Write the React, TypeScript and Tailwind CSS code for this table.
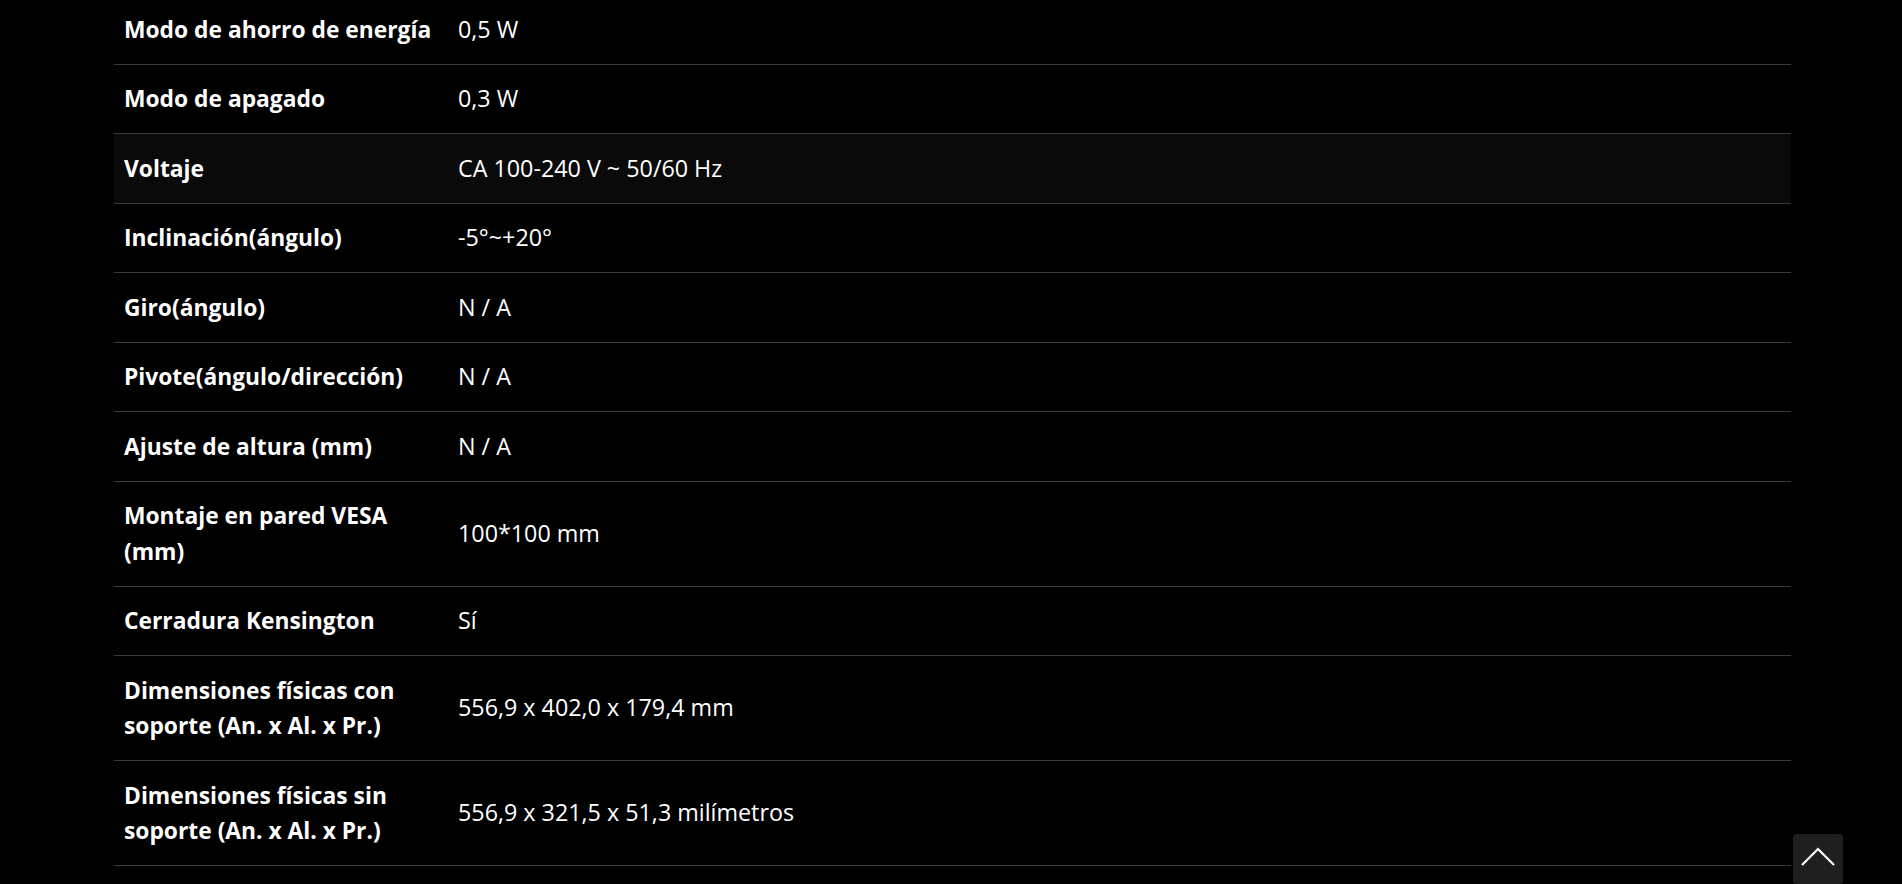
const specs = [
  { label: 'Modo de ahorro de energía', value: '0,5 W' },
  { label: 'Modo de apagado', value: '0,3 W' },
  { label: 'Voltaje', value: 'CA 100-240 V ~ 50/60 Hz', active: true },
  { label: 'Inclinación(ángulo)', value: '-5°~+20°' },
  { label: 'Giro(ángulo)', value: 'N / A' },
  { label: 'Pivote(ángulo/dirección)', value: 'N / A' },
  { label: 'Ajuste de altura (mm)', value: 'N / A' },
  { label: 'Montaje en pared VESA (mm)', value: '100*100 mm' },
  { label: 'Cerradura Kensington', value: 'Sí' },
  { label: 'Dimensiones físicas con soporte (An. x Al. x Pr.)', value: '556,9 x 402,0 x 179,4 mm' },
  { label: 'Dimensiones físicas sin soporte (An. x Al. x Pr.)', value: '556,9 x 321,5 x 51,3 milímetros' },
];

export default function App() {
  return (
    <div
      className="flex min-h-screen flex-col bg-black text-white"
      style={{ fontFamily: '"Open Sans", "Noto Sans", sans-serif' }}
    >
      <div className="ml-[114px] mt-[-4.8px] w-[1677px]">
        {specs.map((row) => (
          <div
            key={row.label}
            className={`flex items-center border-b border-[#3a3a3a] py-[16.5px] leading-[35.5px] ${
              row.active ? 'bg-[#0a0a0a]' : ''
            }`}
          >
            <div className="w-[344px] shrink-0 pl-[10px] pr-[14px] text-[22.8px] font-bold">
              {row.label}
            </div>
            <div className="flex-1 text-[23.3px]">{row.value}</div>
          </div>
        ))}
      </div>

      {/* Back to top */}
      <button className="fixed bottom-0 right-[59px] flex h-[50px] w-[50px] items-center justify-center rounded-[4px] bg-[#1f1f1f] pb-[5px]">
        <svg width="34" height="19" viewBox="0 0 34 19" fill="none">
          <polyline points="1,18 17,2 33,18" stroke="#fff" strokeWidth="2.2" />
        </svg>
      </button>
    </div>
  );
}
